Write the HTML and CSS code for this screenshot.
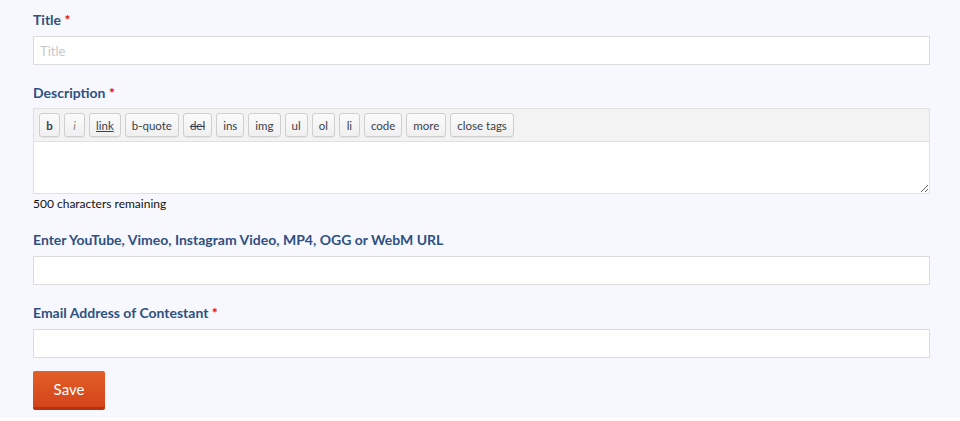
FILE: index.html
```html
<!DOCTYPE html>
<html lang="en">
  <head>
    <meta charset="UTF-8" />
    <meta name="viewport" content="width=device-width, initial-scale=1.0" />
    <title>Submit entry</title>
    <link rel="stylesheet" href="styles.css">
  </head>
  <body>
    <div class="main">
      <form class="entry-form">
        <div class="field">
          <label for="title">Title <span class="req">*</span></label>
          <input type="text" id="title" class="text-input" placeholder="Title" />
        </div>
        <div class="field">
          <label for="description" class="tight">Description <span class="req">*</span></label>
          <div class="quicktags">
            <button type="button" class="qt qt-b">b</button>
            <button type="button" class="qt qt-i">i</button>
            <button type="button" class="qt qt-link">link</button>
            <button type="button" class="qt">b-quote</button>
            <button type="button" class="qt qt-del">del</button>
            <button type="button" class="qt">ins</button>
            <button type="button" class="qt">img</button>
            <button type="button" class="qt">ul</button>
            <button type="button" class="qt">ol</button>
            <button type="button" class="qt">li</button>
            <button type="button" class="qt">code</button>
            <button type="button" class="qt">more</button>
            <button type="button" class="qt">close tags</button>
          </div>
          <textarea id="description" class="text-area"></textarea>
          <div class="counter">500 characters remaining</div>
        </div>
        <div class="field">
          <label for="video">Enter YouTube, Vimeo, Instagram Video, MP4, OGG or WebM URL</label>
          <input type="text" id="video" class="text-input" />
        </div>
        <div class="field">
          <label for="email">Email Address of Contestant <span class="req">*</span></label>
          <input type="text" id="email" class="text-input" />
        </div>
        <button type="submit" class="save">Save</button>
      </form>
    </div>
  </body>
</html>
```

FILE: styles.css
```css
html {
  background: #ffffff;
}

body {
  margin: 0;
  font-family: Lato, "Noto Sans", sans-serif;
  color: #222222;
}

.main {
  background: #f7f8fd;
  padding: 10px 30px 8px 33px;
  height: 400px;
}

.entry-form {
  display: flex;
  flex-direction: column;
}

.field {
  display: flex;
  flex-direction: column;
  margin-bottom: 18px;
}

.field label {
  font-size: 14px;
  font-weight: 700;
  line-height: 20px;
  color: #2f5082;
  margin-bottom: 6px;
}

.field label.tight {
  margin-bottom: 5px;
}

.req {
  color: #ee0000;
}

.text-input {
  height: 29px;
  box-sizing: border-box;
  border: 1px solid #dcdcdc;
  background: #ffffff;
  padding: 0 6px;
  font-family: inherit;
  font-size: 13px;
  outline: none;
}

.text-input::placeholder {
  color: #c8c8cc;
}

.quicktags {
  display: flex;
  gap: 4px;
  align-items: center;
  height: 33px;
  box-sizing: border-box;
  padding: 0 5px;
  background: #f3f3f3;
  border: 1px solid #e0e0e0;
  border-bottom: none;
}

.qt {
  height: 24px;
  padding: 0 6px;
  min-width: 21px;
  border: 1px solid #cfcfcf;
  border-radius: 3px;
  background: linear-gradient(#fbfbfb, #f0f0f0);
  box-shadow: 0 1px 0 rgba(0, 0, 0, 0.06);
  font-family: inherit;
  font-size: 11.5px;
  color: #3a3f4a;
}

.qt-b {
  font-weight: 700;
}

.qt-i {
  font-style: italic;
  color: #888888;
}

.qt-link {
  text-decoration: underline;
}

.qt-del {
  text-decoration: line-through;
}

.text-area {
  height: 53px;
  box-sizing: border-box;
  border: 1px solid #e0e0e0;
  background: #ffffff;
  resize: vertical;
  outline: none;
}

.counter {
  padding-top: 1px;
  font-size: 12px;
  line-height: 17px;
  color: #111111;
}

.save {
  align-self: flex-start;
  width: 72px;
  height: 39px;
  margin-top: -5px;
  border: none;
  border-bottom: 3px solid #b8320f;
  border-radius: 2px;
  background: linear-gradient(#e35f28, #d3441a);
  color: #ffffff;
  font-family: inherit;
  font-size: 15px;
}
```
